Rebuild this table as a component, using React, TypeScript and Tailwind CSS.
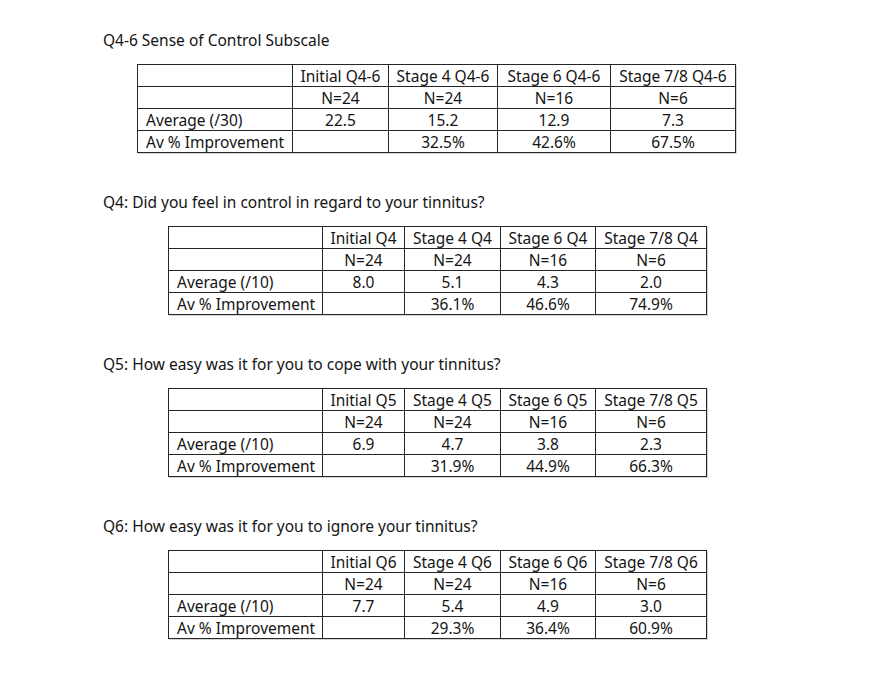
import React from "react";

type Section = {
  title: string;
  indent: string;
  tw: string;
  widths: number[];
  headers: string[];
  ns: string[];
  avgLabel: string;
  avgs: string[];
  imps: string[];
};

const narrow = [154, 82, 96, 95, 111];

const sections: Section[] = [
  {
    title: "Q4-6 Sense of Control Subscale",
    indent: "ml-[34px]",
    tw: "w-[598px]",
    widths: [155, 96, 109, 113, 125],
    headers: ["Initial Q4-6", "Stage 4 Q4-6", "Stage 6 Q4-6", "Stage 7/8 Q4-6"],
    ns: ["N=24", "N=24", "N=16", "N=6"],
    avgLabel: "Average (/30)",
    avgs: ["22.5", "15.2", "12.9", "7.3"],
    imps: ["", "32.5%", "42.6%", "67.5%"],
  },
  {
    title: "Q4: Did you feel in control in regard to your tinnitus?",
    indent: "ml-[65px]",
    tw: "w-[538px]",
    widths: narrow,
    headers: ["Initial Q4", "Stage 4 Q4", "Stage 6 Q4", "Stage 7/8 Q4"],
    ns: ["N=24", "N=24", "N=16", "N=6"],
    avgLabel: "Average (/10)",
    avgs: ["8.0", "5.1", "4.3", "2.0"],
    imps: ["", "36.1%", "46.6%", "74.9%"],
  },
  {
    title: "Q5: How easy was it for you to cope with your tinnitus?",
    indent: "ml-[65px]",
    tw: "w-[538px]",
    widths: narrow,
    headers: ["Initial Q5", "Stage 4 Q5", "Stage 6 Q5", "Stage 7/8 Q5"],
    ns: ["N=24", "N=24", "N=16", "N=6"],
    avgLabel: "Average (/10)",
    avgs: ["6.9", "4.7", "3.8", "2.3"],
    imps: ["", "31.9%", "44.9%", "66.3%"],
  },
  {
    title: "Q6: How easy was it for you to ignore your tinnitus?",
    indent: "ml-[65px]",
    tw: "w-[538px]",
    widths: narrow,
    headers: ["Initial Q6", "Stage 4 Q6", "Stage 6 Q6", "Stage 7/8 Q6"],
    ns: ["N=24", "N=24", "N=16", "N=6"],
    avgLabel: "Average (/10)",
    avgs: ["7.7", "5.4", "4.9", "3.0"],
    imps: ["", "29.3%", "36.4%", "60.9%"],
  },
];

const cell = "border border-[#262626] h-[22px] p-0 leading-[19px] whitespace-nowrap";

function DataTable({ s }: { s: Section }) {
  const rows: [string, string[]][] = [
    ["", s.headers],
    ["", s.ns],
    [s.avgLabel, s.avgs],
    ["Av % Improvement", s.imps],
  ];
  return (
    <table className={`${s.indent} ${s.tw} mt-[14px] border-collapse table-fixed shadow-[1px_1px_0_#d4d4d4]`}>
      <colgroup>
        {s.widths.map((w, i) => (
          <col key={i} style={{ width: w }} />
        ))}
      </colgroup>
      <tbody>
        {rows.map(([label, vals], ri) => (
          <tr key={ri}>
            <td className={`${cell} text-left pl-[8px] pt-[2px]`}>{label}</td>
            {vals.map((v, ci) => (
              <td key={ci} className={`${cell} text-center pt-[2px]`}>
                {v}
              </td>
            ))}
          </tr>
        ))}
      </tbody>
    </table>
  );
}

export default function App() {
  return (
    <div
      className="w-[870px] h-[682px] bg-white text-[#141414] text-[15.5px] pt-[30px] pl-[103px] overflow-hidden"
      style={{ fontFamily: '"Noto Sans", "Open Sans", sans-serif' }}
    >
      {sections.map((s, i) => (
        <div key={i} className={i === 0 ? "" : "mt-[39px]"}>
          <div className="leading-[20px]">{s.title}</div>
          <DataTable s={s} />
        </div>
      ))}
    </div>
  );
}
